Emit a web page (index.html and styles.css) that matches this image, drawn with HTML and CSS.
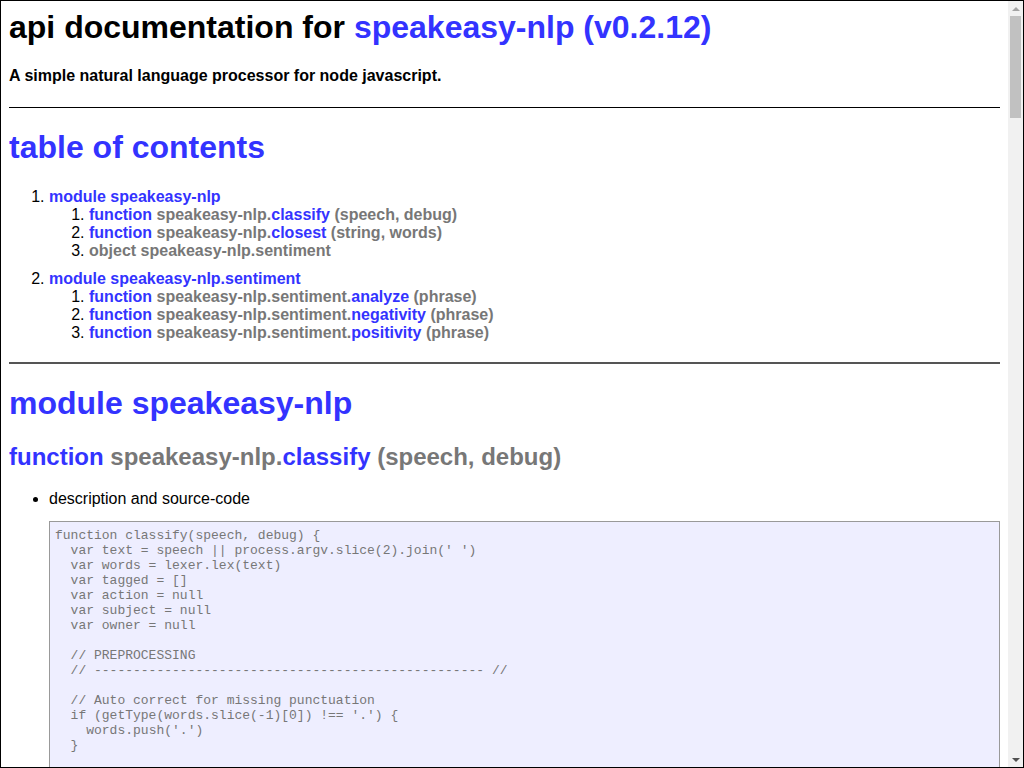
FILE: index.html
```html
<!DOCTYPE html>
<html lang="en">
<head>
<meta charset="utf-8">
<title>api documentation for speakeasy-nlp (v0.2.12)</title>
<link rel="stylesheet" href="styles.css">
</head>
<body>
<div class="page">
  <div class="apidoc">
    <h1 class="title">api documentation for <a href="#">speakeasy-nlp (v0.2.12)</a></h1>
    <h4 class="desc">A simple natural language processor for node javascript.</h4>
    <hr class="rule">

    <h1><a href="#">table of contents</a></h1>
    <ol class="toc">
      <li class="toc-module"><a href="#">module speakeasy-nlp</a>
        <ol>
          <li><span class="sig"><a href="#">function</a> speakeasy-nlp.<a href="#">classify</a> (speech, debug)</span></li>
          <li><span class="sig"><a href="#">function</a> speakeasy-nlp.<a href="#">closest</a> (string, words)</span></li>
          <li><span class="sig">object speakeasy-nlp.sentiment</span></li>
        </ol>
      </li>
      <li class="toc-module"><a href="#">module speakeasy-nlp.sentiment</a>
        <ol>
          <li><span class="sig"><a href="#">function</a> speakeasy-nlp.sentiment.<a href="#">analyze</a> (phrase)</span></li>
          <li><span class="sig"><a href="#">function</a> speakeasy-nlp.sentiment.<a href="#">negativity</a> (phrase)</span></li>
          <li><span class="sig"><a href="#">function</a> speakeasy-nlp.sentiment.<a href="#">positivity</a> (phrase)</span></li>
        </ol>
      </li>
    </ol>

    <section class="section">
      <h1><a href="#">module speakeasy-nlp</a></h1>
      <h2><span class="sig"><a href="#">function</a> speakeasy-nlp.<a href="#">classify</a> (speech, debug)</span></h2>
      <ul class="details">
        <li>description and source-code
<pre class="code">function classify(speech, debug) {
  var text = speech || process.argv.slice(2).join(' ')
  var words = lexer.lex(text)
  var tagged = []
  var action = null
  var subject = null
  var owner = null

  // PREPROCESSING
  // -------------------------------------------------- //

  // Auto correct for missing punctuation
  if (getType(words.slice(-1)[0]) !== '.') {
    words.push('.')
  }

  // Tag each word with its part of speech
  tagged = tagger.tag(words)

  // Pull out the action, subject and owner of the sentence
  tagged.forEach(function (tag, index) {
    var word = tag[0]
    var type = tag[1]

    if (!action &amp;&amp; /^VB/.test(type)) {
      action = word.toLowerCase()
    }
    if (!subject &amp;&amp; /^NN/.test(type)) {
      subject = word.toLowerCase()
    }
    if (!owner &amp;&amp; /^PRP/.test(type)) {
      owner = word.toLowerCase()
    }
  })

  return {
    action: action,
    subject: subject,
    owner: owner,
    tokens: words,
    tags: tagged
  }
}</pre>
        </li>
      </ul>
    </section>
  </div>
</div>
<div class="scrollbar" aria-hidden="true">
  <div class="sb-btn"><span class="sb-arrow sb-up"></span></div>
  <div class="sb-track"><div class="sb-thumb"></div></div>
  <div class="sb-btn"><span class="sb-arrow sb-down"></span></div>
</div>
</body>
</html>
```

FILE: styles.css
```css
html {
  height: 100%;
}

body {
  box-sizing: border-box;
  display: flex;
  height: 100vh;
  margin: 0;
  border: 1px solid #000;
  overflow: hidden;
  background: #fff;
  color: #000;
  font-family: "Liberation Sans", Arial, Helvetica, sans-serif;
  font-size: 16px;
}

.page {
  flex: 1;
  min-width: 0;
  padding: 8px;
  overflow: hidden;
}

a {
  color: #33f;
  font-weight: bold;
  text-decoration: none;
}

h1 {
  font-size: 32px;
  line-height: 37px;
  margin: 21px 0;
}

h1.title {
  margin-top: 0;
}

h2 {
  font-size: 24px;
  line-height: 28px;
  margin: 20px 0 19px;
}

h4.desc {
  font-size: 16px;
  line-height: 18px;
  margin: 21px 0;
}

.rule {
  border: 0;
  border-top: 1px solid #000;
  margin: 22px 0 0;
  height: 0;
}

.section {
  border-top: 2px solid #555;
  margin-top: 20px;
}

.sig {
  color: #777;
  font-weight: bold;
}

.toc {
  margin: 22px 0 20px;
  padding-left: 40px;
  line-height: 18px;
}

.toc ol {
  margin: 0;
  padding-left: 40px;
}

.toc-module + .toc-module {
  margin-top: 10px;
}

.details {
  margin: 19px 0;
  padding-left: 40px;
  line-height: 18px;
}

.code {
  background: #eef;
  border: 1px solid #999;
  color: #777;
  font-family: "Liberation Mono", "DejaVu Sans Mono", monospace;
  font-size: 13px;
  line-height: 15px;
  margin: 13px 0;
  padding: 6px 5px 4px;
  white-space: pre-wrap;
}

/* drawn vertical scrollbar */
.scrollbar {
  display: flex;
  flex-direction: column;
  flex: 0 0 15px;
  background: #f1f1f1;
}

.sb-btn {
  display: flex;
  align-items: center;
  justify-content: center;
  height: 15px;
}

.sb-arrow {
  width: 0;
  height: 0;
  border-left: 4px solid transparent;
  border-right: 4px solid transparent;
}

.sb-up {
  border-bottom: 4px solid #a3a3a3;
}

.sb-down {
  border-top: 4px solid #505050;
}

.sb-track {
  flex: 1;
  padding: 0 2px;
}

.sb-thumb {
  height: 102px;
  background: #c1c1c1;
}
```
